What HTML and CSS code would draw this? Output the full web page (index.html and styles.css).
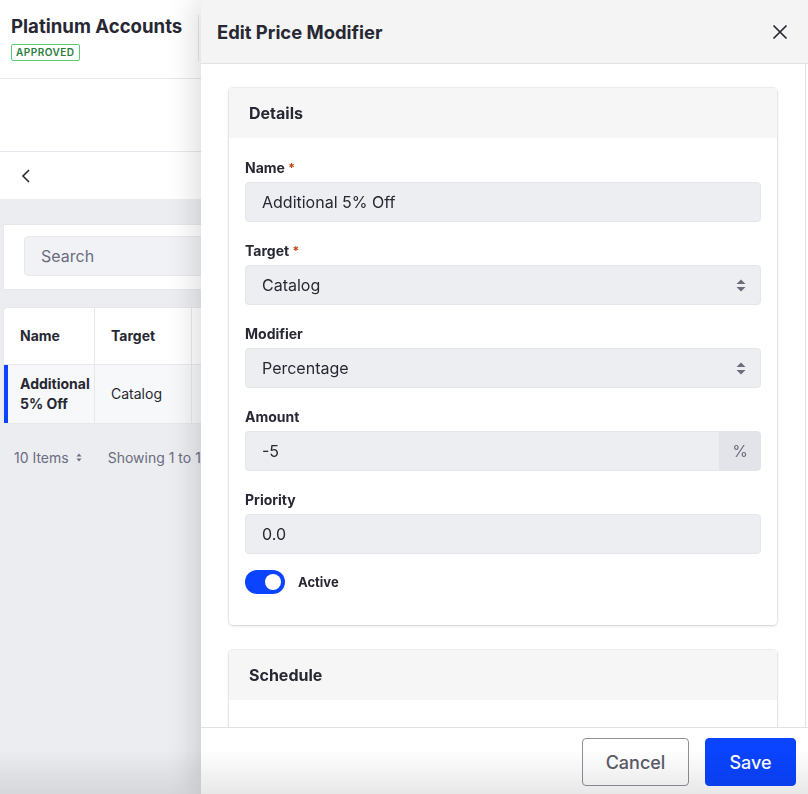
FILE: index.html
```html
<!DOCTYPE html>
<html>
<head>
<meta charset="utf-8">
<link rel="stylesheet" href="styles.css">
</head>
<body>
<div class="page">
  <header class="page-header">
    <div class="title-block">
      <h1 class="page-title">Platinum Accounts</h1>
      <span class="badge">APPROVED</span>
    </div>
    <div class="header-divider"></div>
  </header>
  <div class="tabs-area"></div>
  <div class="nav-row">
    <svg class="back-icon" width="10" height="14" viewBox="0 0 10 14"><polyline points="8,1 2,7 8,13" fill="none" stroke="#272833" stroke-width="1.6"/></svg>
  </div>
  <div class="content">
    <div class="search-card">
      <div class="search-input">Search</div>
    </div>
    <div class="table">
      <div class="table-row table-head">
        <div class="cell c-name">Name</div>
        <div class="cell c-target">Target</div>
        <div class="cell c-rest"></div>
      </div>
      <div class="table-row table-body">
        <div class="cell c-name strong">Additional 5% Off</div>
        <div class="cell c-target">Catalog</div>
        <div class="cell c-rest"></div>
      </div>
    </div>
    <div class="pagination">
      <span class="items">10 Items <svg width="6" height="9" viewBox="0 0 6 9"><path d="M3 0.5 L5.5 3.5 H0.5 Z M3 8.5 L5.5 5.5 H0.5 Z" fill="#6b6c7e"/></svg></span>
      <span class="showing">Showing 1 to 10 of 10 entries</span>
    </div>
  </div>
</div>

<aside class="panel">
  <div class="panel-header">
    <h2 class="panel-title">Edit Price Modifier</h2>
    <svg class="close-icon" width="16" height="16" viewBox="0 0 16 16"><path d="M1.5 1.5 L14.5 14.5 M14.5 1.5 L1.5 14.5" stroke="#272833" stroke-width="1.7" fill="none"/></svg>
  </div>
  <div class="panel-body">
    <section class="sheet">
      <div class="sheet-header">Details</div>
      <div class="sheet-body">
        <div class="field">
          <label class="label">Name <span class="req">*</span></label>
          <div class="input">Additional 5% Off</div>
        </div>
        <div class="field">
          <label class="label">Target <span class="req">*</span></label>
          <div class="input select">Catalog
            <svg class="caret" width="10" height="13" viewBox="0 0 10 13"><path d="M5 0.5 L9.5 5 H0.5 Z M5 12.5 L9.5 8 H0.5 Z" fill="#6b6c7e"/></svg>
          </div>
        </div>
        <div class="field">
          <label class="label">Modifier</label>
          <div class="input select">Percentage
            <svg class="caret" width="10" height="13" viewBox="0 0 10 13"><path d="M5 0.5 L9.5 5 H0.5 Z M5 12.5 L9.5 8 H0.5 Z" fill="#6b6c7e"/></svg>
          </div>
        </div>
        <div class="field">
          <label class="label">Amount</label>
          <div class="input-group">
            <div class="input grow">-5</div>
            <div class="addon">%</div>
          </div>
        </div>
        <div class="field">
          <label class="label">Priority</label>
          <div class="input">0.0</div>
        </div>
        <div class="toggle-row">
          <span class="toggle"><span class="knob"></span></span>
          <span class="toggle-label">Active</span>
        </div>
      </div>
    </section>
    <section class="sheet">
      <div class="sheet-header">Schedule</div>
      <div class="sheet-body tall"></div>
    </section>
  </div>
  <div class="panel-footer">
    <button class="btn btn-secondary">Cancel</button>
    <button class="btn btn-primary">Save</button>
  </div>
</aside>
<div class="bottom-fade"></div>
</body>
</html>
```
FILE: styles.css
```css
* { box-sizing: border-box; }
html, body { margin: 0; height: 100%; }
body {
  font-family: Inter, "Noto Sans", "Liberation Sans", sans-serif;
  color: #272833;
  background: #ecedf1;
  overflow: hidden;
}
.page { width: 808px; }
.page-header {
  height: 79px;
  background: #fff;
  border-bottom: 1px solid #e7e7ed;
  display: flex;
  align-items: flex-start;
  padding: 15px 0 0 11px;
}
.title-block { display: flex; flex-direction: column; align-items: flex-start; }
.page-title {
  margin: 0;
  font-size: 18.6px;
  font-weight: 700;
  line-height: 23px;
}
.badge {
  margin-top: 6px;
  font-size: 10px;
  font-weight: 600;
  letter-spacing: 0.5px;
  color: #287d3c;
  border: 1px solid #5aca75;
  border-radius: 2px;
  padding: 1px 4px;
  line-height: 13px;
}
.header-divider {
  width: 1px;
  height: 46px;
  background: #e7e7ed;
  margin-left: 16px;
}
.tabs-area {
  height: 73px;
  background: #fff;
  border-bottom: 1px solid #e7e7ed;
}
.nav-row {
  height: 47px;
  background: #fff;
  display: flex;
  align-items: center;
  padding-left: 21px;
}
.content { padding: 25px 0 0 3px; }
.search-card {
  background: #fff;
  border: 1px solid #e7e7ed;
  height: 66px;
  padding: 11px 0 0 20px;
}
.search-input {
  height: 40px;
  background: #f1f2f5;
  border: 1px solid #e7e7ed;
  border-radius: 4px;
  color: #6b6c7e;
  font-size: 16px;
  line-height: 38px;
  padding-left: 16px;
}
.table {
  margin-top: 17px;
  background: #fff;
  border: 1px solid #e7e7ed;
  border-radius: 4px 0 0 4px;
}
.table-row { display: flex; }
.table-head { height: 57px; border-bottom: 1px solid #e7e7ed; font-weight: 700; font-size: 14px; }
.table-body { height: 58px; background: #f7f8f9; font-size: 14px; box-shadow: inset 4px 0 0 #0b44ff; }
.cell { display: flex; align-items: center; border-right: 1px solid #e7e7ed; padding-left: 16px; line-height: 20px; }
.c-name { width: 91px; }
.c-target { width: 97px; }
.c-rest { flex: 1; border-right: none; }
.strong { font-weight: 700; padding-right: 4px; }
.pagination {
  display: flex;
  align-items: center;
  margin-top: 25px;
  font-size: 14px;
  color: #6b6c7e;
  padding-left: 11px;
  width: 198px;
  overflow: hidden;
  white-space: nowrap;
}
.items { display: inline-flex; align-items: center; gap: 7px; }
.showing { margin-left: 26px; white-space: nowrap; }

/* Panel */
.panel {
  position: fixed;
  top: 0;
  right: 0;
  width: 607px;
  height: 794px;
  background: #fff;
  display: flex;
  flex-direction: column;
  box-shadow: -6px 0 28px rgba(0,0,0,0.14);
}
.panel-header {
  height: 64px;
  flex: none;
  background: #f4f4f4;
  border-bottom: 1px solid #e2e2e6;
  display: flex;
  align-items: center;
  justify-content: space-between;
  padding: 0 20px 0 16px;
}
.panel-title { margin: 0; font-size: 18.4px; font-weight: 700; }
.panel-body {
  flex: 1;
  overflow: hidden;
  padding: 24px 28px 0 28px;
  margin-right: 2px;
  border-right: 1px solid #e2e2e6;
  display: flex;
  flex-direction: column;
  gap: 25px;
}
.sheet {
  flex: none;
  background: #fff;
  border-radius: 4px;
  box-shadow: 0 0 0 1px rgba(0,0,0,0.06), 0 1px 3px rgba(0,0,0,0.14);
}
.sheet-header {
  background: #f6f6f6;
  height: 50px;
  border-radius: 4px 4px 0 0;
  display: flex;
  align-items: center;
  padding-left: 20px;
  font-size: 16px;
  font-weight: 700;
}
.sheet-body { padding: 20px 16px 31px 16px; }
.sheet-body.tall { height: 80px; }
.field { margin-bottom: 19px; }
.label {
  display: block;
  font-size: 14px;
  font-weight: 700;
  line-height: 20px;
  margin-bottom: 4px;
}
.req { color: #c1410c; font-size: 12px; vertical-align: top; }
.input {
  height: 40px;
  background: #eceef2;
  border: 1px solid #e5e6eb;
  border-radius: 4px;
  font-size: 16px;
  line-height: 38px;
  padding-left: 16px;
  color: #272833;
}
.select { display: flex; align-items: center; justify-content: space-between; padding-right: 14px; }
.input-group { display: flex; }
.input.grow { flex: 1; border-radius: 4px 0 0 4px; border-right: none; }
.addon {
  width: 42px;
  height: 40px;
  background: #e3e4e9;
  border: 1px solid #e3e4e9;
  border-radius: 0 4px 4px 0;
  display: flex;
  align-items: center;
  justify-content: center;
  font-size: 16px;
  color: #6b6c7e;
}
.toggle-row { display: flex; align-items: center; gap: 13px; margin-top: -3px; }
.toggle {
  width: 40px;
  height: 24px;
  border-radius: 12px;
  background: #0b44ff;
  display: flex;
  align-items: center;
  justify-content: flex-end;
  padding-right: 4px;
}
.knob { width: 16px; height: 16px; border-radius: 50%; background: #fff; }
.toggle-label { font-size: 13px; font-weight: 700; }

.panel-footer {
  height: 67px;
  flex: none;
  border-top: 1px solid #e2e2e6;
  background: #fff;
  display: flex;
  justify-content: flex-end;
  align-items: flex-start;
  padding: 10px 12px 0 0;
  gap: 16px;
}
.btn {
  height: 48px;
  border-radius: 4px;
  font-family: inherit;
  font-size: 18px;
  font-weight: 500;
  cursor: pointer;
}
.btn-secondary {
  width: 107px;
  background: #fff;
  border: 1px solid #8f909c;
  color: #5b5c6b;
}
.btn-primary {
  width: 91px;
  background: #0b44ff;
  border: 1px solid #0b44ff;
  color: #fff;
}
.bottom-fade {
  position: fixed;
  left: 0;
  right: 0;
  bottom: 0;
  height: 45px;
  background: linear-gradient(to bottom, rgba(0,0,0,0), rgba(0,0,0,0.09));
  pointer-events: none;
}
```
